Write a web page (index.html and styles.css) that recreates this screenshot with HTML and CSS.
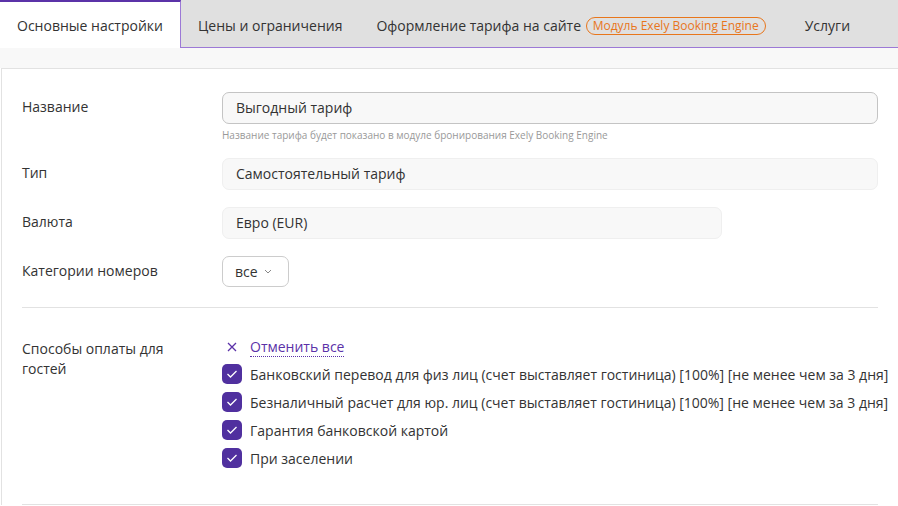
FILE: index.html
```html
<!DOCTYPE html>
<html lang="ru">
<head>
  <meta charset="UTF-8">
  <title>Тариф</title>
  <link rel="stylesheet" href="styles.css">
</head>
<body>

  <!-- Tabs -->
  <div class="tabs">
    <div class="tab active">Основные настройки</div>
    <div class="tab">Цены и ограничения</div>
    <div class="tab">Оформление тарифа на сайте <span class="badge">Модуль Exely Booking Engine</span></div>
    <div class="tab tab-last">Услуги</div>
  </div>

  <div class="strip"></div>

  <!-- Main settings -->
  <div class="panel">
    <div class="row">
      <div class="label">Название</div>
      <div class="field">
        <div class="input bordered">Выгодный тариф</div>
        <div class="hint">Название тарифа будет показано в модуле бронирования Exely Booking Engine</div>
      </div>
    </div>

    <div class="row">
      <div class="label">Тип</div>
      <div class="field">
        <div class="input">Самостоятельный тариф</div>
      </div>
    </div>

    <div class="row">
      <div class="label">Валюта</div>
      <div class="field">
        <div class="input short">Евро (EUR)</div>
      </div>
    </div>

    <div class="row">
      <div class="label">Категории номеров</div>
      <div class="field">
        <div class="select">все
          <svg width="8" height="5" viewBox="0 0 8 5"><path d="M1 1l3 3 3-3" fill="none" stroke="#888" stroke-width="1"/></svg>
        </div>
      </div>
    </div>

    <div class="divider"></div>

    <div class="row payments">
      <div class="label">Способы оплаты для гостей</div>
      <div class="field">
        <div class="cancel-all">
          <svg width="10" height="10" viewBox="0 0 10 10"><path d="M1 1l8 8M9 1l-8 8" stroke="#5b32a8" stroke-width="1.3"/></svg>
          <span class="link">Отменить все</span>
        </div>
        <div class="check"><span class="box"><svg width="12" height="10" viewBox="0 0 12 10"><path d="M1.5 5l3 3 6-6" fill="none" stroke="#fff" stroke-width="1.3"/></svg></span>Банковский перевод для физ лиц (счет выставляет гостиница) [100%] [не менее чем за 3 дня]</div>
        <div class="check"><span class="box"><svg width="12" height="10" viewBox="0 0 12 10"><path d="M1.5 5l3 3 6-6" fill="none" stroke="#fff" stroke-width="1.3"/></svg></span>Безналичный расчет для юр. лиц (счет выставляет гостиница) [100%] [не менее чем за 3 дня]</div>
        <div class="check"><span class="box"><svg width="12" height="10" viewBox="0 0 12 10"><path d="M1.5 5l3 3 6-6" fill="none" stroke="#fff" stroke-width="1.3"/></svg></span>Гарантия банковской картой</div>
        <div class="check"><span class="box"><svg width="12" height="10" viewBox="0 0 12 10"><path d="M1.5 5l3 3 6-6" fill="none" stroke="#fff" stroke-width="1.3"/></svg></span>При заселении</div>
      </div>
    </div>

    <div class="divider"></div>
  </div>

</body>
</html>
```

FILE: styles.css
```css
body {
  margin: 0;
  font-family: "Open Sans", "Noto Sans", sans-serif;
  font-size: 14px;
  color: #333;
  background: #fff;
  overflow: hidden;
}

/* Tabs */
.tabs {
  display: flex;
  height: 48px;
  background-color: #e0e0e0;
  border-bottom: 1px solid #9c79d6;
  box-sizing: border-box;
}

.tab {
  padding: 4px 17px 0;
  line-height: 43px;
  color: #333;
  white-space: nowrap;
}

.tab.active {
  background-color: #fff;
  border-top: 2px solid #5b32a8;
  border-right: 1px solid #9c79d6;
  padding-top: 2px;
  height: 48px;
  box-sizing: border-box;
}

.tab-last {
  padding-left: 22px;
}

.badge {
  display: inline-block;
  border: 1px solid #e8761c;
  border-radius: 10px;
  color: #e8761c;
  font-size: 12px;
  line-height: 16px;
  padding: 0 6px;
  margin-left: 1px;
  vertical-align: 1px;
}

.strip {
  height: 20px;
  background-color: #f8f8f8;
}

/* Panel */
.panel {
  margin-left: 1px;
  border-top: 1px solid #e2e2e2;
  border-left: 1px solid #e2e2e2;
  padding: 23px 20px 0 20px;
  width: 856px;
}

.row {
  display: flex;
  margin-bottom: 17px;
}

.label {
  width: 170px;
  margin-right: 30px;
  flex-shrink: 0;
  line-height: 20px;
  padding-top: 5px;
}

.field {
  flex: 1;
}

.input {
  height: 32px;
  box-sizing: border-box;
  border: 1px solid #efefef;
  border-radius: 7px;
  background-color: #f8f8f8;
  padding: 0 13px;
  line-height: 30px;
  font-size: 14px;
}

.input.bordered {
  border-color: #c4c4c4;
}

.input.short {
  width: 500px;
}

.hint {
  font-size: 10px;
  color: #999;
  margin-top: 5px;
  line-height: 12px;
}

.select {
  display: inline-flex;
  align-items: center;
  gap: 6px;
  height: 31px;
  box-sizing: border-box;
  border: 1px solid #ccc;
  border-radius: 7px;
  padding: 0 16px 0 12px;
}

.divider {
  border-top: 1px solid #e2e2e2;
  margin-top: 20px;
}

.payments {
  padding-top: 26px;
  margin-bottom: 32px;
}

.payments .label {
  padding-top: 5px;
}

.cancel-all {
  display: flex;
  align-items: center;
  height: 26px;
  padding-left: 5px;
}

.cancel-all svg {
  margin-right: 13px;
}

.link {
  color: #5b32a8;
  border-bottom: 1px dotted #5b32a8;
  line-height: 18px;
}

.check {
  display: flex;
  align-items: center;
  height: 28px;
  white-space: nowrap;
}

.box {
  width: 20px;
  height: 20px;
  border-radius: 5px;
  background-color: #50309f;
  display: inline-flex;
  align-items: center;
  justify-content: center;
  margin-right: 8px;
}
```
